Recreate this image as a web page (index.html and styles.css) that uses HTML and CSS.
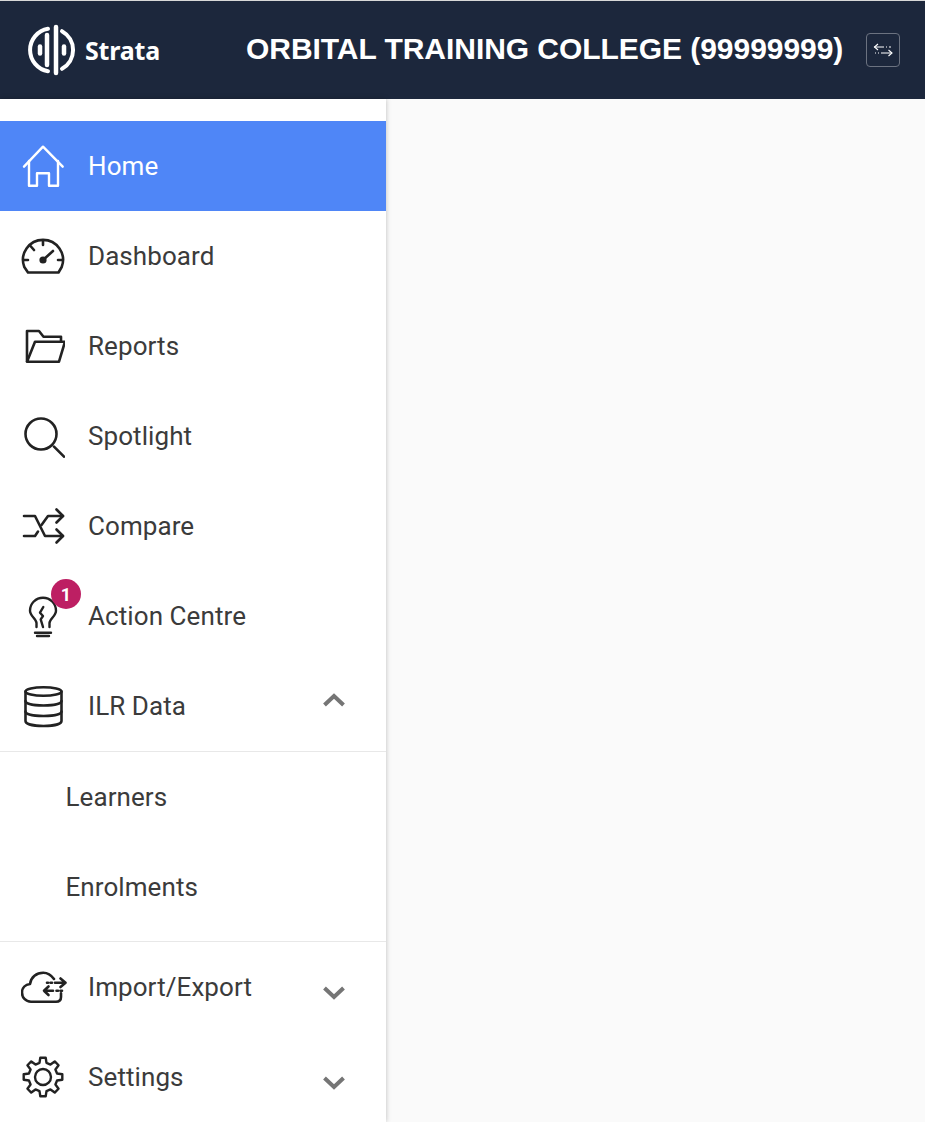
FILE: index.html
```html
<!DOCTYPE html>
<html lang="en">
<head>
    <meta charset="UTF-8">
    <meta name="viewport" content="width=device-width, initial-scale=1.0">
    <title>Strata</title>
    <link rel="stylesheet" href="styles.css">
</head>
<body>
    <div class="header">
        <div class="brand">
            <svg class="brand-logo" width="48" height="52" viewBox="0 0 48 52" fill="none" stroke="#fff" stroke-linecap="round">
                <path d="M20 4.800A21.500 21.500 0 0 0 20 47.200" stroke-width="4"/>
                <path d="M34 7.200A21.500 21.500 0 0 1 34 44.800" stroke-width="4"/>
                <path d="M28 3V49" stroke-width="4.500"/>
                <path d="M19 11V41" stroke-width="4.500"/>
                <path d="M12 22.500V29.500" stroke-width="4.500"/>
                <path d="M36 22.500V29.500" stroke-width="4.500"/>
            </svg>
            <span class="brand-name">Strata</span>
        </div>
        <div class="org-name">ORBITAL TRAINING COLLEGE (99999999)</div>
        <button class="switch-btn" type="button">
            <svg width="20" height="14" viewBox="0 0 20 14" fill="none" stroke="#fff" stroke-width="1.100">
                <path d="M1 4H11M13 4H14M16 4H18" />
                <path d="M5 1L1.500 4L5 7" />
                <path d="M2 10H3M5 10H6M8 10H19" />
                <path d="M15.500 7L19 10L15.500 13" />
            </svg>
        </button>
    </div>

    <div class="layout">
        <div class="sidebar">
            <a class="nav-item active">
                <svg class="nav-icon" width="44" height="44" viewBox="0 0 44 44" fill="none" stroke="#fff" stroke-width="2.400" stroke-linecap="round" stroke-linejoin="round">
                    <path d="M3 22.700L22 2.700L41.700 22.700"/>
                    <path d="M8 17V41.700H16V29.300H28V41.700H37V17"/>
                </svg>
                <span>Home</span>
            </a>
            <a class="nav-item">
                <svg class="nav-icon" width="44" height="44" viewBox="0 0 44 44" fill="none" stroke="#222" stroke-width="2.600" stroke-linecap="round" stroke-linejoin="round">
                    <path d="M7 38.500H37.500L40.700 33A20 20 0 1 0 3.300 33Z"/>
                    <path d="M22 6.500V11M9.500 12L13 16M2.500 26H7M37 26H41.500"/>
                    <circle cx="22" cy="26" r="3.600" fill="#222" stroke="none"/>
                    <path d="M22 26L32 17"/>
                </svg>
                <span>Dashboard</span>
            </a>
            <a class="nav-item">
                <svg class="nav-icon" width="44" height="44" viewBox="0 0 44 44" fill="none" stroke="#222" stroke-width="2.600" stroke-linejoin="round">
                    <path d="M6 37.700V7H18L22.500 12.700H40V17.700"/>
                    <path d="M14 17.700H44L38 37.700H6Z"/>
                </svg>
                <span>Reports</span>
            </a>
            <a class="nav-item">
                <svg class="nav-icon" width="44" height="44" viewBox="0 0 44 44" fill="none" stroke="#222" stroke-width="2.600" stroke-linecap="round">
                    <circle cx="20" cy="20" r="15.500"/>
                    <path d="M33 32.700L43 42.700"/>
                </svg>
                <span>Spotlight</span>
            </a>
            <a class="nav-item">
                <svg class="nav-icon" width="44" height="44" viewBox="0 0 44 44" fill="none" stroke="#222" stroke-width="2.600" stroke-linecap="round" stroke-linejoin="round">
                    <path d="M3 12H14L24 32H42"/>
                    <path d="M3 32H14L17 27.500M20.500 21L27 12H42"/>
                    <path d="M35.500 5.500L42 12L35.500 18.500"/>
                    <path d="M35.500 25.500L42 32L35.500 38.500"/>
                </svg>
                <span>Compare</span>
            </a>
            <a class="nav-item">
                <span class="icon-wrap">
                    <svg class="nav-icon" width="44" height="44" viewBox="0 0 44 44" fill="none" stroke="#222" stroke-width="2.400" stroke-linecap="round" stroke-linejoin="round">
                        <path d="M15.500 33V29C15.500 25 9 22 9 16.700A13 13 0 0 1 35 16.700C35 22 28.500 25 28.500 29V33"/>
                        <path d="M22.300 13L19 18.700L22 22L19.700 25.400L22 33"/>
                        <path d="M14 38.700H30M16 42H28"/>
                    </svg>
                    <span class="badge">1</span>
                </span>
                <span>Action Centre</span>
            </a>
            <a class="nav-item">
                <svg class="nav-icon" width="44" height="44" viewBox="0 0 44 44" fill="none" stroke="#222" stroke-width="2.600" stroke-linecap="round" stroke-linejoin="round">
                    <ellipse cx="22.500" cy="7.500" rx="18" ry="4.200"/>
                    <path d="M4.500 7.500V37C4.500 40 12 42 22.500 42S40.500 40 40.500 37V7.500"/>
                    <path d="M4.500 17C4.500 20 12 21.500 22.500 21.500S40.500 20 40.500 17"/>
                    <path d="M4.500 27.500C4.500 30.500 12 32 22.500 32S40.500 30.500 40.500 27.500"/>
                </svg>
                <span>ILR Data</span>
                <svg class="chevron" width="24" height="14" viewBox="0 0 24 14" fill="none" stroke="#757575" stroke-width="4"><path d="M2.500 12L12 3L21.500 12"/></svg>
            </a>
            <div class="sub-nav">
                <a class="sub-item">Learners</a>
                <a class="sub-item">Enrolments</a>
            </div>
            <a class="nav-item">
                <svg class="nav-icon" width="46" height="44" viewBox="0 0 46 44" fill="none" stroke="#222" stroke-width="2.600" stroke-linecap="round" stroke-linejoin="round">
                    <path d="M40 28.300V32C40 35 38 36.700 35 36.700H10C4.500 36.700 1 32.500 1 27.500C1 22.500 4.500 19.500 9 19C10 12 15.500 7.700 22.300 7.700C27 7.700 30.500 10.500 33 14"/>
                    <path d="M26 17.700H27M29.500 17.700H31M34 17.700H44.500M39.500 13.500L44.500 17.700L39.500 22"/>
                    <path d="M23 25.700H32M35.500 25.700H37M39.500 25.700H41M27.500 21.500L23 25.700L27.500 30"/>
                </svg>
                <span class="after-wide-icon">Import/Export</span>
                <svg class="chevron chevron-down" width="24" height="14" viewBox="0 0 24 14" fill="none" stroke="#757575" stroke-width="4"><path d="M2.500 2L12 11L21.500 2"/></svg>
            </a>
            <a class="nav-item">
                <svg class="nav-icon" width="44" height="44" viewBox="0 0 44 44" fill="none" stroke="#222" stroke-width="2.400" stroke-linejoin="round">
                    <path d="M18.500 7.930L19.300 2.700H24.700L25.500 7.930L29.470 9.580L33.740 6.440L37.560 10.260L34.420 14.530L36.070 18.500L41.300 19.300V24.700L36.070 25.500L34.420 29.470L37.560 33.740L33.740 37.560L29.470 34.420L25.500 36.070L24.700 41.300H19.300L18.500 36.070L14.530 34.420L10.260 37.560L6.440 33.740L9.580 29.470L7.930 25.500L2.700 24.700V19.300L7.930 18.500L9.580 14.530L6.440 10.260L10.260 6.440L14.530 9.580Z"/>
                    <circle cx="22" cy="22" r="8"/>
                </svg>
                <span>Settings</span>
                <svg class="chevron chevron-down" width="24" height="14" viewBox="0 0 24 14" fill="none" stroke="#757575" stroke-width="4"><path d="M2.500 2L12 11L21.500 2"/></svg>
            </a>
        </div>
        <div class="content"></div>
    </div>
</body>
</html>
```

FILE: styles.css
```css
* {
    margin: 0;
    padding: 0;
    box-sizing: border-box;
}

body {
    font-family: Roboto, 'Liberation Sans', sans-serif;
    background: #fafafa;
    color: #3b3b3b;
    height: 1122px;
    overflow: hidden;
}

.header {
    height: 99px;
    background: #1c273c;
    border-top: 1px solid #d8d8d8;
    display: flex;
    align-items: center;
    padding-left: 28px;
    padding-right: 25px;
}

.brand {
    display: flex;
    align-items: center;
    width: 218px;
}

.brand-logo {
    flex: none;
}

.brand-name {
    font-family: 'Noto Sans', sans-serif;
    font-weight: 700;
    font-size: 25px;
    letter-spacing: -0.2px;
    color: #fff;
    margin-left: 9px;
}

.org-name {
    font-family: 'Liberation Sans', sans-serif;
    font-weight: bold;
    font-size: 30px;
    letter-spacing: -0.05px;
    color: #fff;
    white-space: nowrap;
    flex: 1;
    padding-bottom: 2px;
}

.switch-btn {
    width: 34px;
    height: 34px;
    background: transparent;
    border: 1px solid #6b7280;
    border-radius: 4px;
    display: flex;
    align-items: center;
    justify-content: center;
}

.layout {
    display: flex;
    height: 1023px;
}

.sidebar {
    width: 386px;
    flex: none;
    background: #fff;
    padding-top: 22px;
    box-shadow: 0 0 5px rgba(0, 0, 0, 0.25);
}

.content {
    flex: 1;
}

.nav-item {
    height: 90px;
    display: flex;
    align-items: center;
    padding-left: 21px;
    font-size: 26px;
    color: #3b3b3b;
    letter-spacing: 0.08px;
    position: relative;
}

.nav-item.active {
    background: #4f86f7;
    color: #fff;
}

.nav-icon {
    flex: none;
    margin-right: 23px;
    display: block;
}

.after-wide-icon {
    margin-left: -2px;
}

.icon-wrap {
    position: relative;
    display: block;
}

.badge {
    position: absolute;
    top: -15px;
    left: 30px;
    width: 30px;
    height: 30px;
    border-radius: 50%;
    background: #bd1f63;
    color: #fff;
    font-size: 18px;
    font-weight: bold;
    letter-spacing: 0;
    display: flex;
    align-items: center;
    justify-content: center;
}

.chevron {
    position: absolute;
    right: 40px;
    top: 32px;
}

.chevron-down {
    top: 44px;
}

.sub-nav {
    border-top: 1px solid #e8e8e8;
    border-bottom: 1px solid #e8e8e8;
    padding-bottom: 9px;
}

.sub-item {
    height: 90px;
    display: flex;
    align-items: center;
    padding-left: 65.500px;
    font-size: 26px;
    letter-spacing: 0.08px;
    color: #3b3b3b;
}
```
